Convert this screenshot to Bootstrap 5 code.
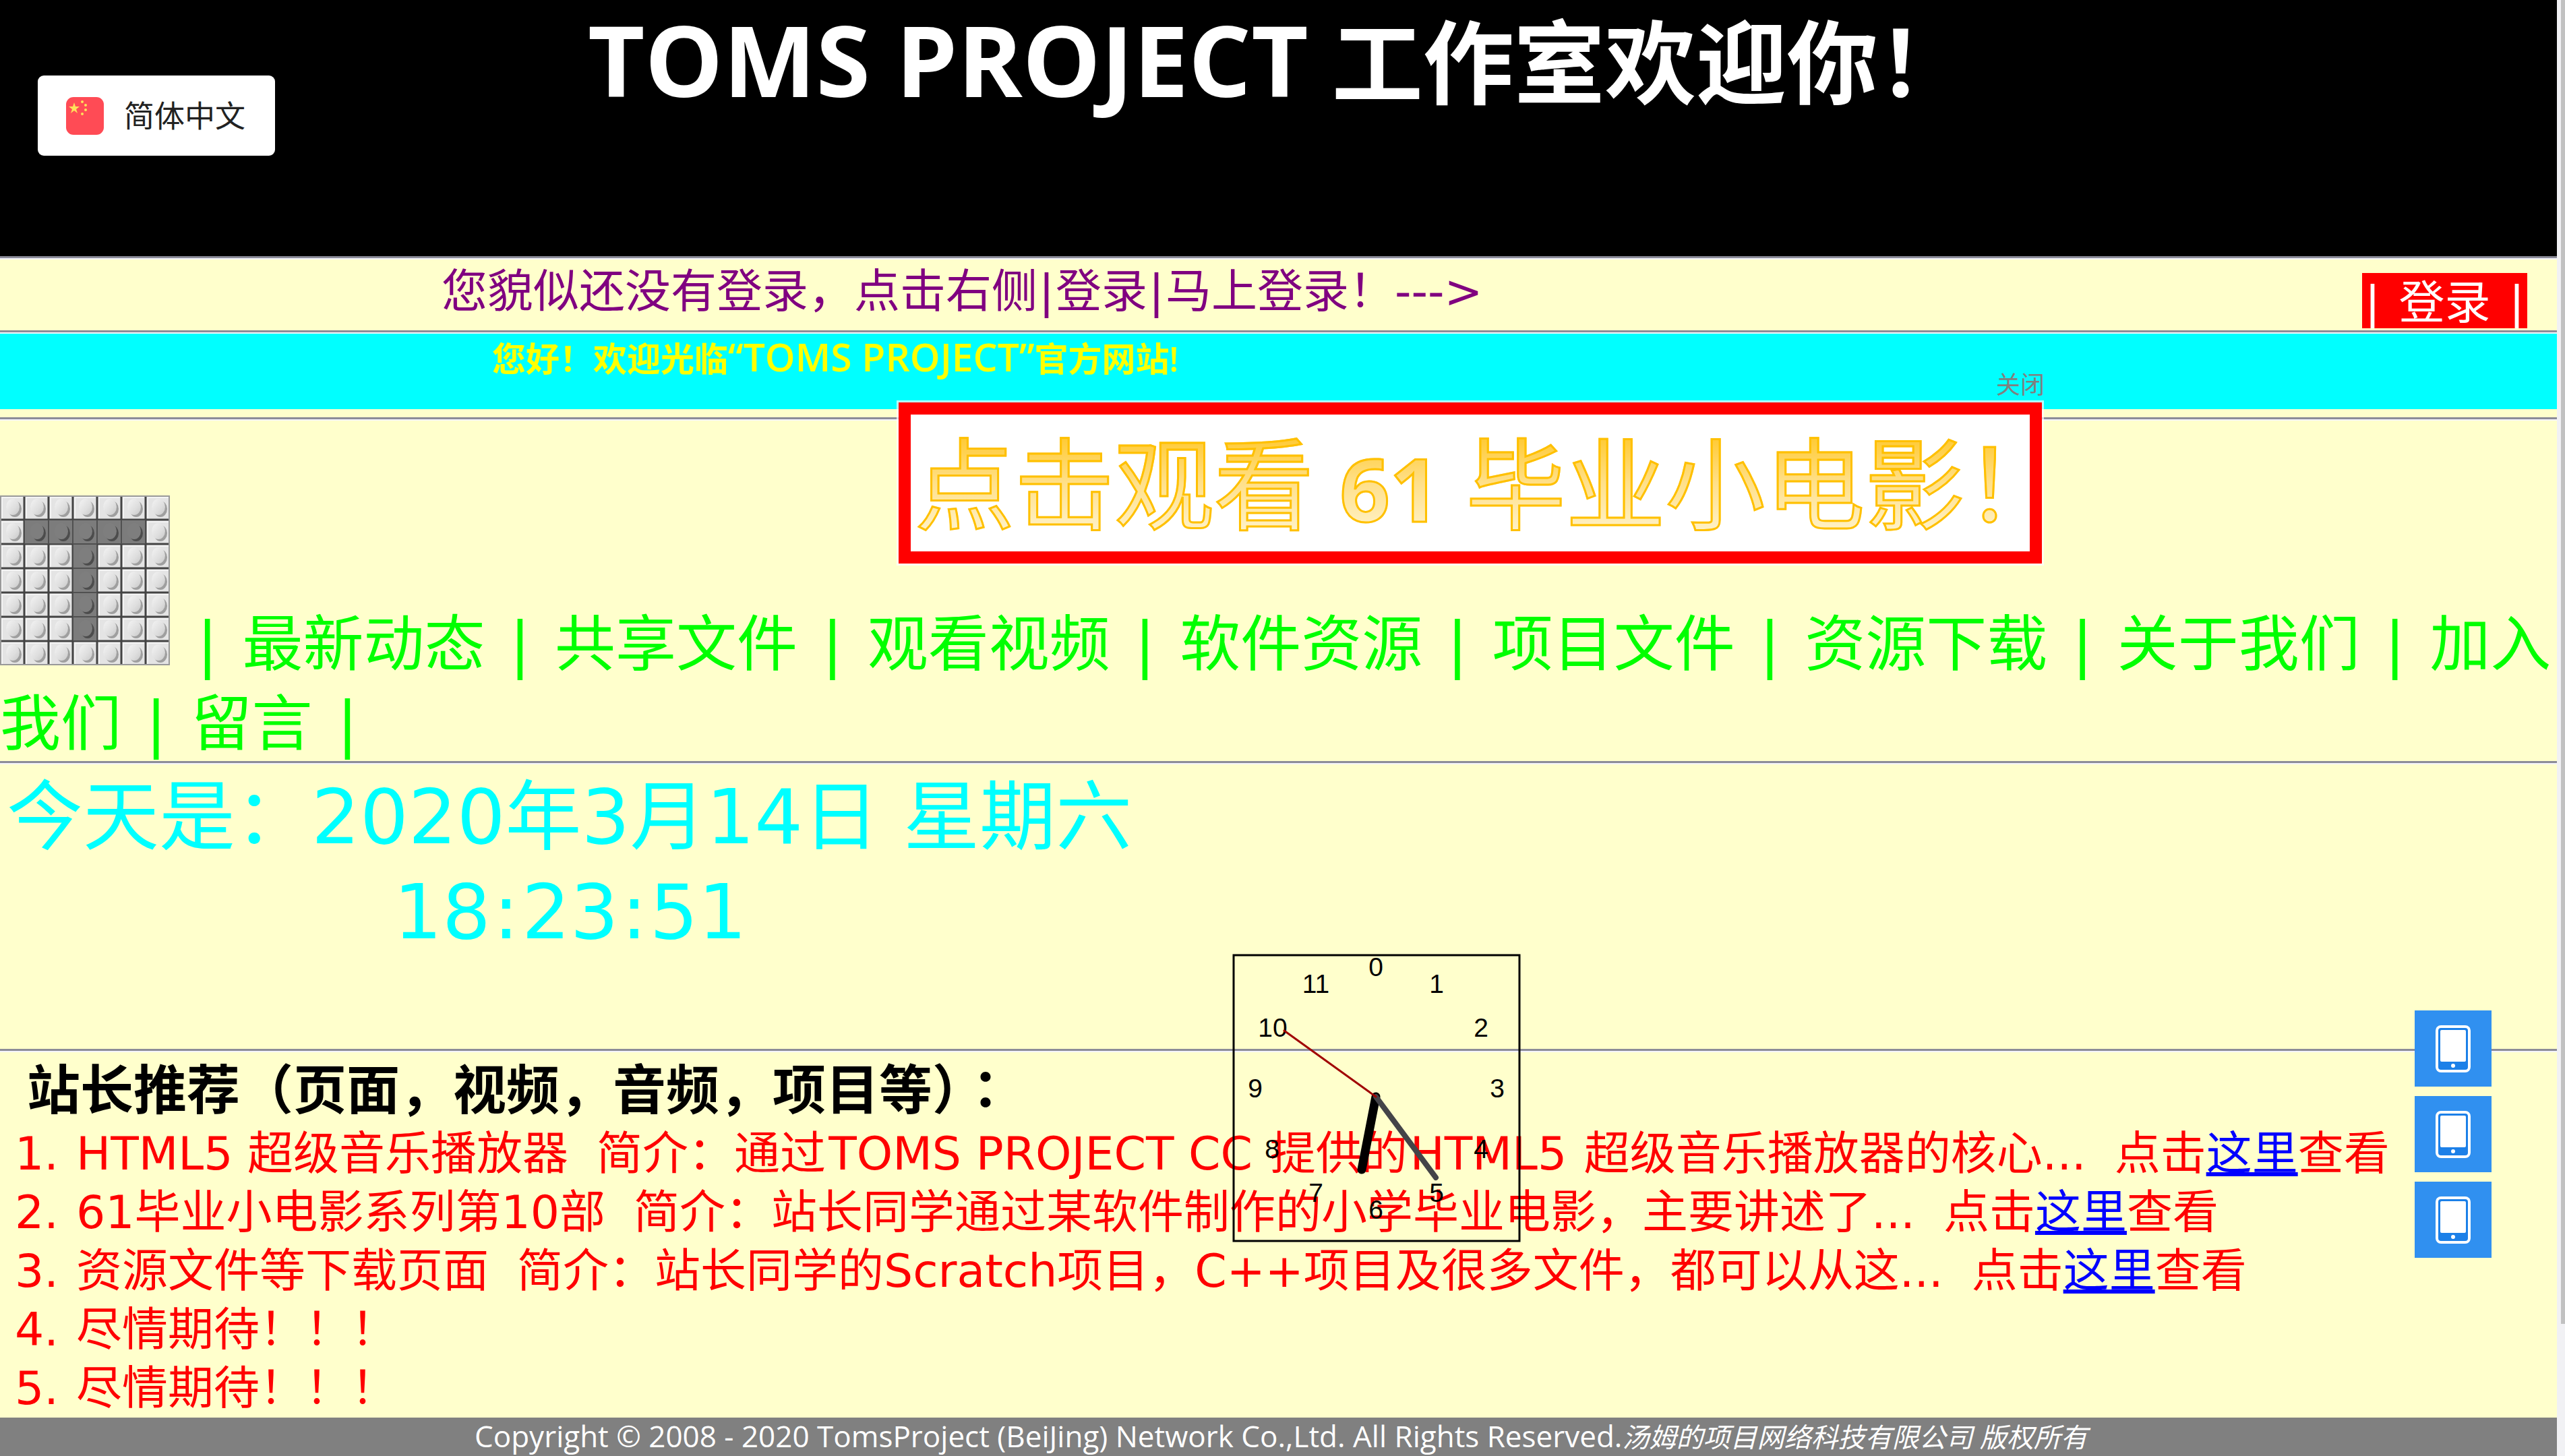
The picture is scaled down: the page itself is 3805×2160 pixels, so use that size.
<!DOCTYPE html>
<html lang="zh-CN">
<head>
<meta charset="utf-8">
<meta name="viewport" content="width=device-width, initial-scale=1">
<title>TOMS PROJECT</title>
<link href="https://cdn.jsdelivr.net/npm/bootstrap@5.3.0/dist/css/bootstrap.min.css" rel="stylesheet">
<style>
  body { background: #ffffcc; color: #000; font-family: "DejaVu Sans", "Noto Sans CJK SC", sans-serif; }
  .page-body { min-width: 0; }
  .humanist { font-family: "Open Sans", "Noto Sans CJK SC", sans-serif; }
  .rule { border-top: 3px solid #8c8c98; border-bottom: 2px solid #f4f4fa; height: 5px; }
  .rule-spaced { margin-top: 12px; }
  .site-head { background: #000; height: 380px; }
  .site-title { font-size: 135px; line-height: 176px; padding-left: 872px; color: #fff; }
  .site-title span { font-size: 146px; }
  .lang-btn { left: 56px; top: 112px; width: 352px; height: 119px; border-radius: 9px; background: #fff; border: 0; font-size: 45px; line-height: 60px; color: #222; padding: 0 42px; gap: 30px; }
  .login-row { height: 105px; padding-left: 655px; padding-right: 44px; font-size: 68px; line-height: 96px; color: #800080; }
  .login-btn { background: #f00; color: #fff; line-height: 90px; height: 82px; width: 245px; margin-top: 20px; text-decoration: none; overflow: hidden; }
  .bar { margin: 0 2px; }
  .notice { background: #0ff; color: #ff0; height: 112px; padding-left: 730px; font-size: 50px; line-height: 68px; font-weight: 600; }
  .notice span { font-size: 57px; }
  .menu { font-size: 90px; line-height: 118px; height: 505px; padding-top: 111px; color: #0f0; }
  .menu a { color: #0f0; text-decoration: none; }
  .menu i { font-style: normal; margin: 0 8px; }
  .brand-img { width: 252px; height: 252px; vertical-align: baseline; margin-right: 4px; }
  .today { color: #0ff; font-size: 113px; line-height: 141px; height: 422px; padding: 8px 10px; }
  .clock-line { padding-left: 574px; }
  .clock-line i { font-style: normal; margin: 0 4px; }
  .picks-title { font-size: 79px; line-height: 98px; padding: 2px 0 0 40px; font-weight: 700; }
  .centred-mark { font-family: "Noto Sans CJK TC", sans-serif; }
  .picks { color: #f00; font-size: 68px; line-height: 87px; padding-left: 22px; margin: 0; }
  .picks li { white-space: nowrap; }
  .picks .num { display: inline-block; width: 91px; }
  .picks .gap-l { margin-left: 42px; }
  .picks .latin { margin: 0 4px; }
  .picks a { color: #00f; text-decoration: underline; }
  .site-foot { background: #808080; color: #fff; height: 59px; font-size: 44px; line-height: 54px; padding-left: 704px; white-space: nowrap; }
  .site-foot em { font-size: 40px; }
  .promo { left: 1333px; top: 597px; width: 1696px; height: 239px; border: 18px solid #f00; background: #fff; outline: 3px solid rgba(255,255,255,.7); text-decoration: none; white-space: nowrap; padding-left: 6px; }
  .promo span { font-family: "Open Sans", "Noto Sans CJK SC", sans-serif; font-size: 148px; line-height: 203px; background: linear-gradient(#ffc930 15%, #ffe08a 50%, #fff4d0 90%); -webkit-background-clip: text; background-clip: text; -webkit-text-fill-color: transparent; -webkit-text-stroke: 3px #ffc000; }
  .promo b { font-size: 130px; font-weight: 700; }
  .promo-close { left: 2961px; top: 547px; font-size: 36px; line-height: 50px; color: #808080; background: none; border: 0; padding: 0; }
  .clock { left: 1828px; top: 1415px; }
  .side-tools { left: 3582px; top: 1499px; gap: 14px; }
  .side-tools button { width: 114px; height: 113px; background: #3090f0; border: 0; padding: 0; }
  .scroll-track { width: 12px; background: #f1f1f4; }
  .scroll-thumb { width: 6px; height: 1964px; background: #c1c1c1; }
</style>
</head>
<body class="d-flex align-items-stretch position-relative">
<div class="page-body flex-grow-1">
  <header class="site-head position-relative">
    <h1 class="site-title humanist fw-bold m-0"><span>TOMS PROJECT</span> 工作室欢迎你！</h1>
    <button class="lang-btn humanist position-absolute d-flex align-items-center text-nowrap" type="button">
      <svg width="56" height="56" viewBox="0 0 56 56" aria-hidden="true" class="flex-shrink-0">
        <rect width="56" height="56" rx="11" fill="#ff4b55"/>
        <path d="M12 8l2 6h6l-5 4 2 6-5-4-5 4 2-6-5-4h6z" fill="#ffe15a"/>
        <g fill="#ffe15a"><circle cx="24" cy="7" r="2"/><circle cx="29" cy="12" r="2"/><circle cx="29" cy="19" r="2"/><circle cx="24" cy="25" r="2"/></g>
      </svg>
      <span>简体中文</span>
    </button>
  </header>
  <div class="rule"></div>
  <div class="login-row d-flex justify-content-between">
    <span>您貌似还没有登录，点击右侧<span class="bar">|</span>登录<span class="bar">|</span>马上登录！---&gt;</span>
    <a class="login-btn d-flex justify-content-between px-1" href="#"><span>|</span><span>登录</span><span>|</span></a>
  </div>
  <div class="rule"></div>
  <div class="notice humanist">您好！欢迎光临<span>“TOMS PROJECT”</span>官方网站!</div>
  <div class="rule rule-spaced"></div>
  <nav class="menu"><svg class="brand-img" viewBox="0 0 252 252" role="img" aria-label="T">
      <defs>
        <linearGradient id="studLight" x1="0" y1="0" x2="1" y2="1"><stop offset="0" stop-color="#f4f4f4"/><stop offset=".6" stop-color="#dedede"/><stop offset="1" stop-color="#c8c8c8"/></linearGradient>
        <pattern id="studs" width="36" height="36" patternUnits="userSpaceOnUse">
          <path d="M0 0H36V36H0z" fill="none" stroke="#444" stroke-width="3"/>
          <path d="M3 34V3H34" fill="none" stroke="#fff" stroke-opacity=".6" stroke-width="2"/>
          <ellipse cx="22" cy="20" rx="10" ry="12" fill="#000" fill-opacity=".3"/>
          <ellipse cx="19" cy="17" rx="10" ry="12" fill="url(#studLight)"/>
        </pattern>
        <pattern id="darkStuds" width="36" height="36" patternUnits="userSpaceOnUse">
          <path d="M0 0H36V36H0z" fill="#7c7c7c" stroke="#505050" stroke-width="2"/>
          <ellipse cx="22" cy="20" rx="10" ry="12" fill="#4c4c4c"/>
          <ellipse cx="19" cy="17" rx="10" ry="12" fill="#7e7e7e"/>
        </pattern>
      </defs>
      <rect width="252" height="252" fill="#e4e4e4"/>
      <rect width="252" height="252" fill="url(#studs)"/>
      <path d="M36 36H216V72H144V216H108V72H36z" fill="url(#darkStuds)"/>
      <rect x="1" y="1" width="250" height="250" fill="none" stroke="#999" stroke-width="2"/>
    </svg> <i>|</i> <a href="#">最新动态</a> <i>|</i> <a href="#">共享文件</a> <i>|</i> <a href="#">观看视频</a> <i>|</i> <a href="#">软件资源</a> <i>|</i> <a href="#">项目文件</a> <i>|</i> <a href="#">资源下载</a> <i>|</i> <a href="#">关于我们</a> <i>|</i> <a href="#">加入我们</a> <i>|</i> <a href="#">留言</a> <i>|</i></nav>
  <div class="rule"></div>
  <section class="today">
    <div>今天是：2020年3月14日 星期六</div>
    <div class="clock-line">18<i>:</i>23<i>:</i>51</div>
  </section>
  <div class="rule"></div>
  <section>
    <h2 class="picks-title m-0">站长推荐（页面，视频，音频，项目等）<span class="centred-mark" lang="zh-TW">：</span></h2>
    <ol class="picks list-unstyled">
      <li><span class="num">1.</span>HTML5 超级音乐播放器<span class="gap-l">简介：通过<span class="latin">TOMS PROJECT CC</span> 提供的<span class="latin">HTML5</span> 超级音乐播放器的核心...</span><span class="gap-l">点击<a href="#">这里</a>查看</span></li>
      <li><span class="num">2.</span>61毕业小电影系列第10部<span class="gap-l">简介：站长同学通过某软件制作的小学毕业电影，主要讲述了...</span><span class="gap-l">点击<a href="#">这里</a>查看</span></li>
      <li><span class="num">3.</span>资源文件等下载页面<span class="gap-l">简介：站长同学的Scratch项目，C++项目及很多文件，都可以从这...</span><span class="gap-l">点击<a href="#">这里</a>查看</span></li>
      <li><span class="num">4.</span>尽情期待！！！</li>
      <li><span class="num">5.</span>尽情期待！！！</li>
    </ol>
  </section>
  <footer class="site-foot humanist">Copyright © 2008 - 2020 TomsProject (BeiJing) Network Co.,Ltd. All Rights Reserved.<em>汤姆的项目网络科技有限公司 版权所有</em></footer>
</div>
<div class="scroll-track d-flex justify-content-end flex-shrink-0" aria-hidden="true"><div class="scroll-thumb"></div></div>

<button class="promo-close position-absolute" type="button">关闭</button>
<a class="promo position-absolute d-block" href="#"><span>点击观看 <b>61</b> 毕业小电影！</span></a>

<svg class="clock position-absolute" width="428" height="428" viewBox="0 0 428 428" role="img" aria-label="18:23:51">
  <rect x="2" y="2" width="424" height="424" fill="none" stroke="#000" stroke-width="3"/>
  <g font-family="Liberation Sans, sans-serif" font-size="39" text-anchor="middle" fill="#000">
    <text x="213" y="33">0</text><text x="303" y="58">1</text><text x="369" y="123">2</text><text x="393" y="213">3</text>
    <text x="369" y="303">4</text><text x="303" y="368">5</text><text x="213" y="393">6</text><text x="124" y="368">7</text>
    <text x="59" y="303">8</text><text x="34" y="213">9</text><text x="60" y="123">10</text><text x="124" y="58">11</text>
  </g>
  <g stroke-linecap="round">
    <path d="M213 212L192 320" stroke="#000" stroke-width="13"/>
    <path d="M213 212L302 332" stroke="#444448" stroke-width="8"/>
    <path d="M213 212L77 114" stroke="#a00000" stroke-width="3"/>
  </g>
</svg>

<div class="side-tools position-absolute d-flex flex-column">
  <button type="button" aria-label="手机版"><svg width="52" height="70" viewBox="0 0 52 70"><rect x="2" y="2" width="48" height="66" rx="6" fill="#1c80e8" stroke="#fff" stroke-width="4"/><rect x="7" y="7" width="38" height="47" rx="2" fill="#fff"/><circle cx="26" cy="60" r="3" fill="#fff"/></svg></button>
  <button type="button" aria-label="平板版"><svg width="52" height="70" viewBox="0 0 52 70"><rect x="2" y="2" width="48" height="66" rx="6" fill="#1c80e8" stroke="#fff" stroke-width="4"/><rect x="7" y="7" width="38" height="47" rx="2" fill="#fff"/><circle cx="26" cy="60" r="3" fill="#fff"/></svg></button>
  <button type="button" aria-label="客户端"><svg width="52" height="70" viewBox="0 0 52 70"><rect x="2" y="2" width="48" height="66" rx="6" fill="#1c80e8" stroke="#fff" stroke-width="4"/><rect x="7" y="7" width="38" height="47" rx="2" fill="#fff"/><circle cx="26" cy="60" r="3" fill="#fff"/></svg></button>
</div>
<script src="https://cdn.jsdelivr.net/npm/bootstrap@5.3.0/dist/js/bootstrap.bundle.min.js"></script>
</body>
</html>
